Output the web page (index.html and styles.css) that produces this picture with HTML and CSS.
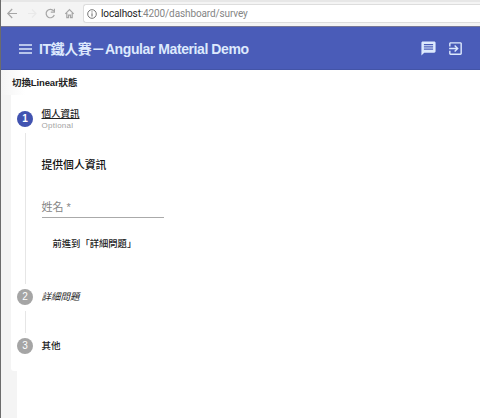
FILE: index.html
```
<!DOCTYPE html>
<html lang="zh-Hant">
<head>
<meta charset="utf-8">
<title>Angular Material Demo</title>
<link rel="stylesheet" href="styles.css">
</head>
<body>
<div class="window">
  <div class="browser">
    <svg class="nav" viewBox="0 0 83 24" fill="none" stroke="#a6a6a6" stroke-width="1.2">
      <path d="M17 13.5H8M12.2 9L7.8 13.5l4.400 4.500"/>
      <path stroke="#e9e9e9" d="M28 13.500h8M32 9.500l4 4-4 4"/>
      <path d="M53.700 11A4.200 4.200 0 1 0 54.300 15M54.400 8.700v3.500h-3.600"/>
      <path d="M65.300 13.800l4.200-4.300 4.200 4.300M66.800 13v4.600h1.700v-2.500h2v2.500h1.700V13"/>
    </svg>
    <div class="address">
      <svg class="info" viewBox="0 0 10 10" fill="none" stroke="#666"><circle cx="5" cy="5" r="4.3" stroke-width=".9"/><path d="M5 4.300v3.200M5 2.400v1.100"/></svg>
      <span class="url"><b>localhost</b>:4200/dashboard/survey</span>
    </div>
  </div>
  <header class="toolbar">
    <svg class="menu" viewBox="0 0 13 10" stroke="#dde8fc" stroke-width="1.3"><path d="M0 1h13M0 5h13M0 9h13"/></svg>
    <h1>IT鐵人賽－Angular Material Demo</h1>
    <svg class="icon" viewBox="0 0 24 24"><path d="M20 2H4c-1.100 0-2 .9-2 2v18l4-4h14c1.100 0 2-.9 2-2V4c0-1.100-.9-2-2-2zm-1.500 11.700h-13v-1.700h13v1.700zm0-3.200h-13V8.800h13v1.700zm0-3.200h-13V5.600h13v1.700z"/></svg>
    <svg class="icon" viewBox="0 0 24 24"><path d="M10.090 15.590L11.500 17l5-5-5-5-1.410 1.410L12.670 11H3v2h9.670l-2.580 2.590zM19 3H5c-1.110 0-2 .9-2 2v4h2V5h14v14H5v-4H3v4c0 1.100.89 2 2 2h14c1.100 0 2-.9 2-2V5c0-1.100-.9-2-2-2z"/></svg>
  </header>
  <main class="page">
    <div class="toggle">切換Linear狀態</div>
    <div class="stepper">
      <section class="step first">
        <div class="rail"><span class="num active">1</span><i class="line"></i></div>
        <div class="body">
          <div class="label current">個人資訊</div>
          <div class="optional">Optional</div>
          <h2>提供個人資訊</h2>
          <div class="field">姓名 *</div>
          <div class="next">前進到「詳細問題」</div>
        </div>
      </section>
      <section class="step second">
        <div class="rail"><span class="num">2</span><i class="line"></i></div>
        <div class="body"><div class="label italic">詳細問題</div></div>
      </section>
      <section class="step">
        <div class="rail"><span class="num">3</span></div>
        <div class="body"><div class="label">其他</div></div>
      </section>
    </div>
    <div class="rest"></div>
  </main>
</div>
</body>
</html>
```
FILE: styles.css
```
* { box-sizing: border-box; }
body {
  margin: 0;
  background: #fff;
  font-family: "Liberation Sans", "Noto Sans CJK TC", sans-serif;
  color: #222;
}
.window {
  height: 418px;
  overflow: hidden;
  border-left: 1px solid #6c6c6c;
  display: flex;
  flex-direction: column;
}
.browser {
  height: 27px;
  flex: none;
  display: flex;
  background: #f4f4f4;
  border-top: 2px solid #e7e7e7;
  border-bottom: 1px solid #777796;
}
.nav { width: 83px; height: 24px; margin: -2px 0 0 -1px; flex: none; }
.address {
  flex: 1;
  height: 19px;
  margin-top: 2px;
  display: flex;
  align-items: center;
  padding-left: 3px;
  background: #fff;
  border: 1px solid #ddd;
  border-right: 0;
  border-radius: 3px 0 0 3px;
}
.info { width: 10px; height: 10px; margin-right: 4px; }
.url { font: 10px/16px Roboto, sans-serif; letter-spacing: -.12px; color: #858585; white-space: nowrap; }
.url b { font-weight: 400; color: #222; }
.toolbar {
  height: 43px;
  flex: none;
  display: flex;
  align-items: center;
  padding: 1px 16px 0 18px;
  background: #4a5cb8;
  border-bottom: 1px solid #4354a7;
}
.menu { width: 13px; height: 10px; margin-right: 7px; }
h1 {
  margin: 0 auto 0 0;
  font-size: 14px;
  line-height: 20px;
  font-weight: 700;
  letter-spacing: -.42px;
  color: #dde9fd;
  white-space: nowrap;
}
.icon { width: 17px; height: 17px; margin: 0 0 0 10px; fill: #dde9fd; }
.page { flex: 1; display: flex; flex-direction: column; background: #f4f4f4; }
.toggle {
  height: 25px;
  flex: none;
  padding: 4px 0 0 11px;
  font-size: 9.5px;
  line-height: 17px;
  font-weight: 700;
  letter-spacing: -.12px;
  background: linear-gradient(90deg, #f4f4f4, #fff 24px);
}
.stepper {
  height: 276px;
  flex: none;
  margin-left: 10px;
  padding: 16px 0 0 6px;
  background: #fff;
  border-bottom-left-radius: 3px;
}
.rest { flex: 1; margin-left: 16px; background: #fff; }
.step { display: grid; grid-template-columns: 16px 1fr; column-gap: 8.5px; }
.first { height: 178px; }
.second { height: 49px; }
.rail { display: flex; flex-direction: column; align-items: center; }
.num {
  width: 16px;
  height: 16px;
  flex: none;
  border-radius: 50%;
  background: #a5a5a5;
  color: #fff;
  font-size: 10px;
  line-height: 16px;
  text-align: center;
}
.active { background: #4153b0; font-weight: 700; }
.line { flex: 1; width: 1px; margin: 6px 0 5px; background: #e6e6e6; }
.label { font-size: 9.5px; line-height: 16px; font-weight: 500; }
.current {
  width: 38px;
  height: 9px;
  line-height: 9px;
  margin-top: -2px;
  text-decoration: underline;
  text-underline-offset: 1px;
}
.optional { margin-top: 3px; font-size: 8px; letter-spacing: .25px; line-height: 9px; color: #a3a3a3; }
h2 { margin: 26px 0 0; font-size: 10.8px; line-height: 18px; font-weight: 500; color: #111; }
.field {
  width: 122px;
  height: 20px;
  margin-top: 24px;
  border-bottom: 1px solid #aaa;
  font-size: 11px;
  line-height: 19px;
  color: #858585;
}
.next { margin: 17px 0 0 11px; font-size: 9.3px; line-height: 18px; font-weight: 500; }
.italic { font-style: italic; font-weight: 400; }
```
